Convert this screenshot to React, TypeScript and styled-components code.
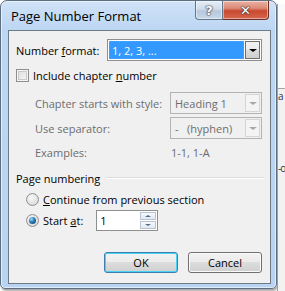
import React from 'react';
import styled, { createGlobalStyle } from 'styled-components';

const Global = createGlobalStyle`
  html, body {
    margin: 0;
    padding: 0;
    background: #ffffff;
  }
  body {
    font-family: "Open Sans", "Noto Sans", sans-serif;
    font-size: 11px;
  }
`;

const Screen = styled.div`
  display: flex;
  width: 285px;
  height: 291px;
  overflow: hidden;
  background: #ffffff;
`;

const Window = styled.div`
  box-sizing: border-box;
  width: 277px;
  height: 289px;
  flex-shrink: 0;
  display: flex;
  flex-direction: column;
  border: 1px solid #5f6f82;
  border-radius: 7px 7px 5px 5px;
  background: linear-gradient(#cfe2f7, #bcd6f3 30px, #b9d4f2);
  box-shadow: 1px 2px 2px rgba(0, 0, 0, 0.35), inset 0 0 0 1px rgba(255, 255, 255, 0.55);
`;

const TitleBar = styled.div`
  display: flex;
  align-items: flex-start;
  height: 29px;
  flex-shrink: 0;
`;

const Title = styled.div`
  margin: 6px 0 0 10px;
  font-size: 13px;
  color: #000;
  flex: 1;
`;

const CaptionButton = styled.div<{ $close?: boolean }>`
  box-sizing: border-box;
  height: 19px;
  width: ${(p) => (p.$close ? '46px' : '28px')};
  display: flex;
  align-items: center;
  justify-content: center;
  border: 1px solid ${(p) => (p.$close ? '#6b3025' : '#66768a')};
  border-top: none;
  border-left: ${(p) => (p.$close ? 'none' : undefined)};
  border-radius: ${(p) => (p.$close ? '0 0 4px 0' : '0 0 0 4px')};
  background: ${(p) =>
    p.$close
      ? 'linear-gradient(#eab1a4, #dc8a77 40%, #c8492f 55%, #d7674f)'
      : 'linear-gradient(#e6eef7, #cfdcec 45%, #b6c8dd 55%, #c9d8ea)'};
  box-shadow: inset 0 0 0 1px rgba(255, 255, 255, 0.45);
  color: #fff;
  font-family: "DejaVu Sans", sans-serif;
  font-weight: bold;
  font-size: 13px;
  text-shadow: 0 0 1px #333, 0 0 1px #333, 0 0 2px #444;
`;

const CaptionGroup = styled.div`
  display: flex;
  margin-right: 7px;
`;

const Client = styled.div`
  box-sizing: border-box;
  flex: 1;
  margin: 0 5px 4px 7px;
  border: 1px solid #6f7a87;
  background: #f0f0f0;
  display: flex;
  flex-direction: column;
  padding: 0 8px 0 7px;
  color: #000;
`;

const Row = styled.div<{ $top: number; $h: number; $indent?: number }>`
  display: flex;
  align-items: center;
  margin-top: ${(p) => p.$top}px;
  height: ${(p) => p.$h}px;
  padding-left: ${(p) => p.$indent || 0}px;
`;

const Label = styled.span<{ $w?: number; $dim?: boolean }>`
  width: ${(p) => (p.$w ? `${p.$w}px` : 'auto')};
  flex-shrink: 0;
  color: ${(p) => (p.$dim ? '#6d6d6d' : '#000')};
  white-space: nowrap;
`;

const Combo = styled.div<{ $disabled?: boolean }>`
  box-sizing: border-box;
  flex: 1;
  height: 100%;
  display: flex;
  align-items: stretch;
  padding: 1px;
  border: 1px solid ${(p) => (p.$disabled ? '#b4b4b4' : '#8e8f8f')};
  background: ${(p) => (p.$disabled ? '#f0f0f0' : '#fff')};
`;

const Selected = styled.div`
  box-sizing: border-box;
  flex: 1;
  display: flex;
  align-items: center;
  padding-left: 2px;
  background: #3399ff;
  color: #fff;
  border: 1px dotted #d08a3a;
`;

const ComboText = styled.div`
  flex: 1;
  display: flex;
  align-items: center;
  padding-left: 3px;
  color: #6d6d6d;
  white-space: pre;
`;

const DropButton = styled.div<{ $disabled?: boolean }>`
  box-sizing: border-box;
  width: 15px;
  margin-left: 1px;
  display: flex;
  align-items: center;
  justify-content: center;
  border: 1px solid ${(p) => (p.$disabled ? '#d5d5d5' : '#707070')};
  background: ${(p) =>
    p.$disabled ? '#f4f4f4' : 'linear-gradient(#f2f2f2, #ebebeb 50%, #dddddd 50%, #cfcfcf)'};
`;

const Arrow = styled.span<{ $color: string; $up?: boolean; $size?: number }>`
  width: 0;
  height: 0;
  border-left: ${(p) => p.$size || 4}px solid transparent;
  border-right: ${(p) => p.$size || 4}px solid transparent;
  ${(p) =>
    p.$up
      ? `border-bottom: ${(p.$size || 4) - 1}px solid ${p.$color};`
      : `border-top: ${(p.$size || 4) - 1}px solid ${p.$color};`}
`;

const CheckBox = styled.span`
  box-sizing: border-box;
  width: 13px;
  height: 13px;
  margin-right: 4px;
  border: 1px solid #8e8f8f;
  background: linear-gradient(135deg, #dcdcdc, #f6f6f6);
  box-shadow: inset 0 0 0 1px #f4f4f4, inset 0 0 0 2px #c9c9c9;
`;

const Radio = styled.span<{ $checked?: boolean }>`
  box-sizing: border-box;
  width: 13px;
  height: 13px;
  margin-right: 4px;
  border-radius: 50%;
  border: 1px solid #8e8f8f;
  background: radial-gradient(circle at 40% 35%, #f8f8f8, #d2d2d2);
  display: flex;
  align-items: center;
  justify-content: center;
  &::after {
    content: '';
    display: ${(p) => (p.$checked ? 'block' : 'none')};
    width: 7px;
    height: 7px;
    border-radius: 50%;
    background: radial-gradient(circle at 35% 30%, #9fdcf8, #2a7ab3 45%, #0e3d63);
  }
`;

const GroupHeader = styled.div`
  display: flex;
  align-items: center;
  margin-top: 10px;
  height: 16px;
`;

const GroupLine = styled.div`
  flex: 1;
  height: 1px;
  margin: 0 -2px 0 6px;
  background: #dcdcdc;
  border-bottom: 1px solid #fff;
`;

const SpinInput = styled.div`
  box-sizing: border-box;
  width: 62px;
  height: 21px;
  display: flex;
  margin-left: 13px;
  border: 1px solid #8e8f8f;
  background: #fff;
`;

const SpinText = styled.div`
  flex: 1;
  display: flex;
  align-items: center;
  padding-left: 3px;
`;

const SpinButtons = styled.div`
  width: 16px;
  display: flex;
  flex-direction: column;
  padding: 1px 1px 1px 0;
  gap: 1px;
`;

const SpinHalf = styled.div`
  flex: 1;
  display: flex;
  align-items: center;
  justify-content: center;
  border: 1px solid #b8c4d2;
  background: linear-gradient(#f6f8fb, #e2e8f0);
`;

const ButtonRow = styled.div`
  display: flex;
  justify-content: flex-end;
  gap: 10px;
  margin-top: 21px;
`;

const Button = styled.div<{ $default?: boolean }>`
  box-sizing: border-box;
  width: 74px;
  height: 21px;
  display: flex;
  align-items: center;
  justify-content: center;
  border: 1px solid ${(p) => (p.$default ? '#3c7fb1' : '#707070')};
  border-radius: 3px;
  background: linear-gradient(#f2f2f2, #ebebeb 50%, #dddddd 50%, #cfcfcf);
  box-shadow: ${(p) => (p.$default ? 'inset 0 0 0 1px #48d2f5' : 'inset 0 0 0 1px #fbfbfb')};
  color: #000;
`;

const Backdrop = styled.div`
  flex: 1;
  display: flex;
  flex-direction: column;
  border-left: 1px solid #a0a0a0;
  margin-top: 4px;
`;

const BackTop = styled.div`
  height: 84px;
  background: #fafafa;
  border-bottom: 1px solid #a5a5a5;
`;

const BackBottom = styled.div`
  flex: 1;
  background: #f2f2f2;
  font-size: 10px;
  color: #333;
  line-height: 12px;
  overflow: hidden;
`;

const BackLine = styled.div<{ $top: number }>`
  margin-top: ${(p) => p.$top}px;
  white-space: nowrap;
  letter-spacing: -1px;
`;

export default function App() {
  return (
    <>
      <Global />
      <Screen>
        <Window>
          <TitleBar>
            <Title>Page Number Format</Title>
            <CaptionGroup>
              <CaptionButton>?</CaptionButton>
              <CaptionButton $close>✕</CaptionButton>
            </CaptionGroup>
          </TitleBar>
          <Client>
            <Row $top={8} $h={22}>
              <Label $w={91}>
                Number <u>f</u>ormat:
              </Label>
              <Combo>
                <Selected>1, 2, 3, ...</Selected>
                <DropButton>
                  <Arrow $color="#000" />
                </DropButton>
              </Combo>
            </Row>
            <Row $top={8} $h={13}>
              <CheckBox />
              <Label>
                Include chapter <u>n</u>umber
              </Label>
            </Row>
            <Row $top={10} $h={22} $indent={19}>
              <Label $w={135} $dim>
                Chapter starts with style:
              </Label>
              <Combo $disabled>
                <ComboText>Heading 1</ComboText>
                <DropButton $disabled>
                  <Arrow $color="#a8a8a8" />
                </DropButton>
              </Combo>
            </Row>
            <Row $top={3} $h={22} $indent={19}>
              <Label $w={135} $dim>
                Use separator:
              </Label>
              <Combo $disabled>
                <ComboText>{'-   (hyphen)'}</ComboText>
                <DropButton $disabled>
                  <Arrow $color="#a8a8a8" />
                </DropButton>
              </Combo>
            </Row>
            <Row $top={5} $h={16} $indent={19}>
              <Label $w={136} $dim>
                Examples:
              </Label>
              <Label $dim>1-1, 1-A</Label>
            </Row>
            <GroupHeader>
              <Label>Page numbering</Label>
              <GroupLine />
            </GroupHeader>
            <Row $top={5} $h={16} $indent={10}>
              <Radio />
              <Label>
                <u>C</u>ontinue from previous section
              </Label>
            </Row>
            <Row $top={3} $h={21} $indent={10}>
              <Radio $checked />
              <Label>
                Start <u>a</u>t:
              </Label>
              <SpinInput>
                <SpinText>1</SpinText>
                <SpinButtons>
                  <SpinHalf>
                    <Arrow $up $size={3} $color="#4b6a91" />
                  </SpinHalf>
                  <SpinHalf>
                    <Arrow $size={3} $color="#4b6a91" />
                  </SpinHalf>
                </SpinButtons>
              </SpinInput>
            </Row>
            <ButtonRow>
              <Button $default>OK</Button>
              <Button>Cancel</Button>
            </ButtonRow>
          </Client>
        </Window>
        <Backdrop>
          <BackTop />
          <BackBottom>
            <BackLine $top={1}>a</BackLine>
            <BackLine $top={60}>-o</BackLine>
          </BackBottom>
        </Backdrop>
      </Screen>
    </>
  );
}
